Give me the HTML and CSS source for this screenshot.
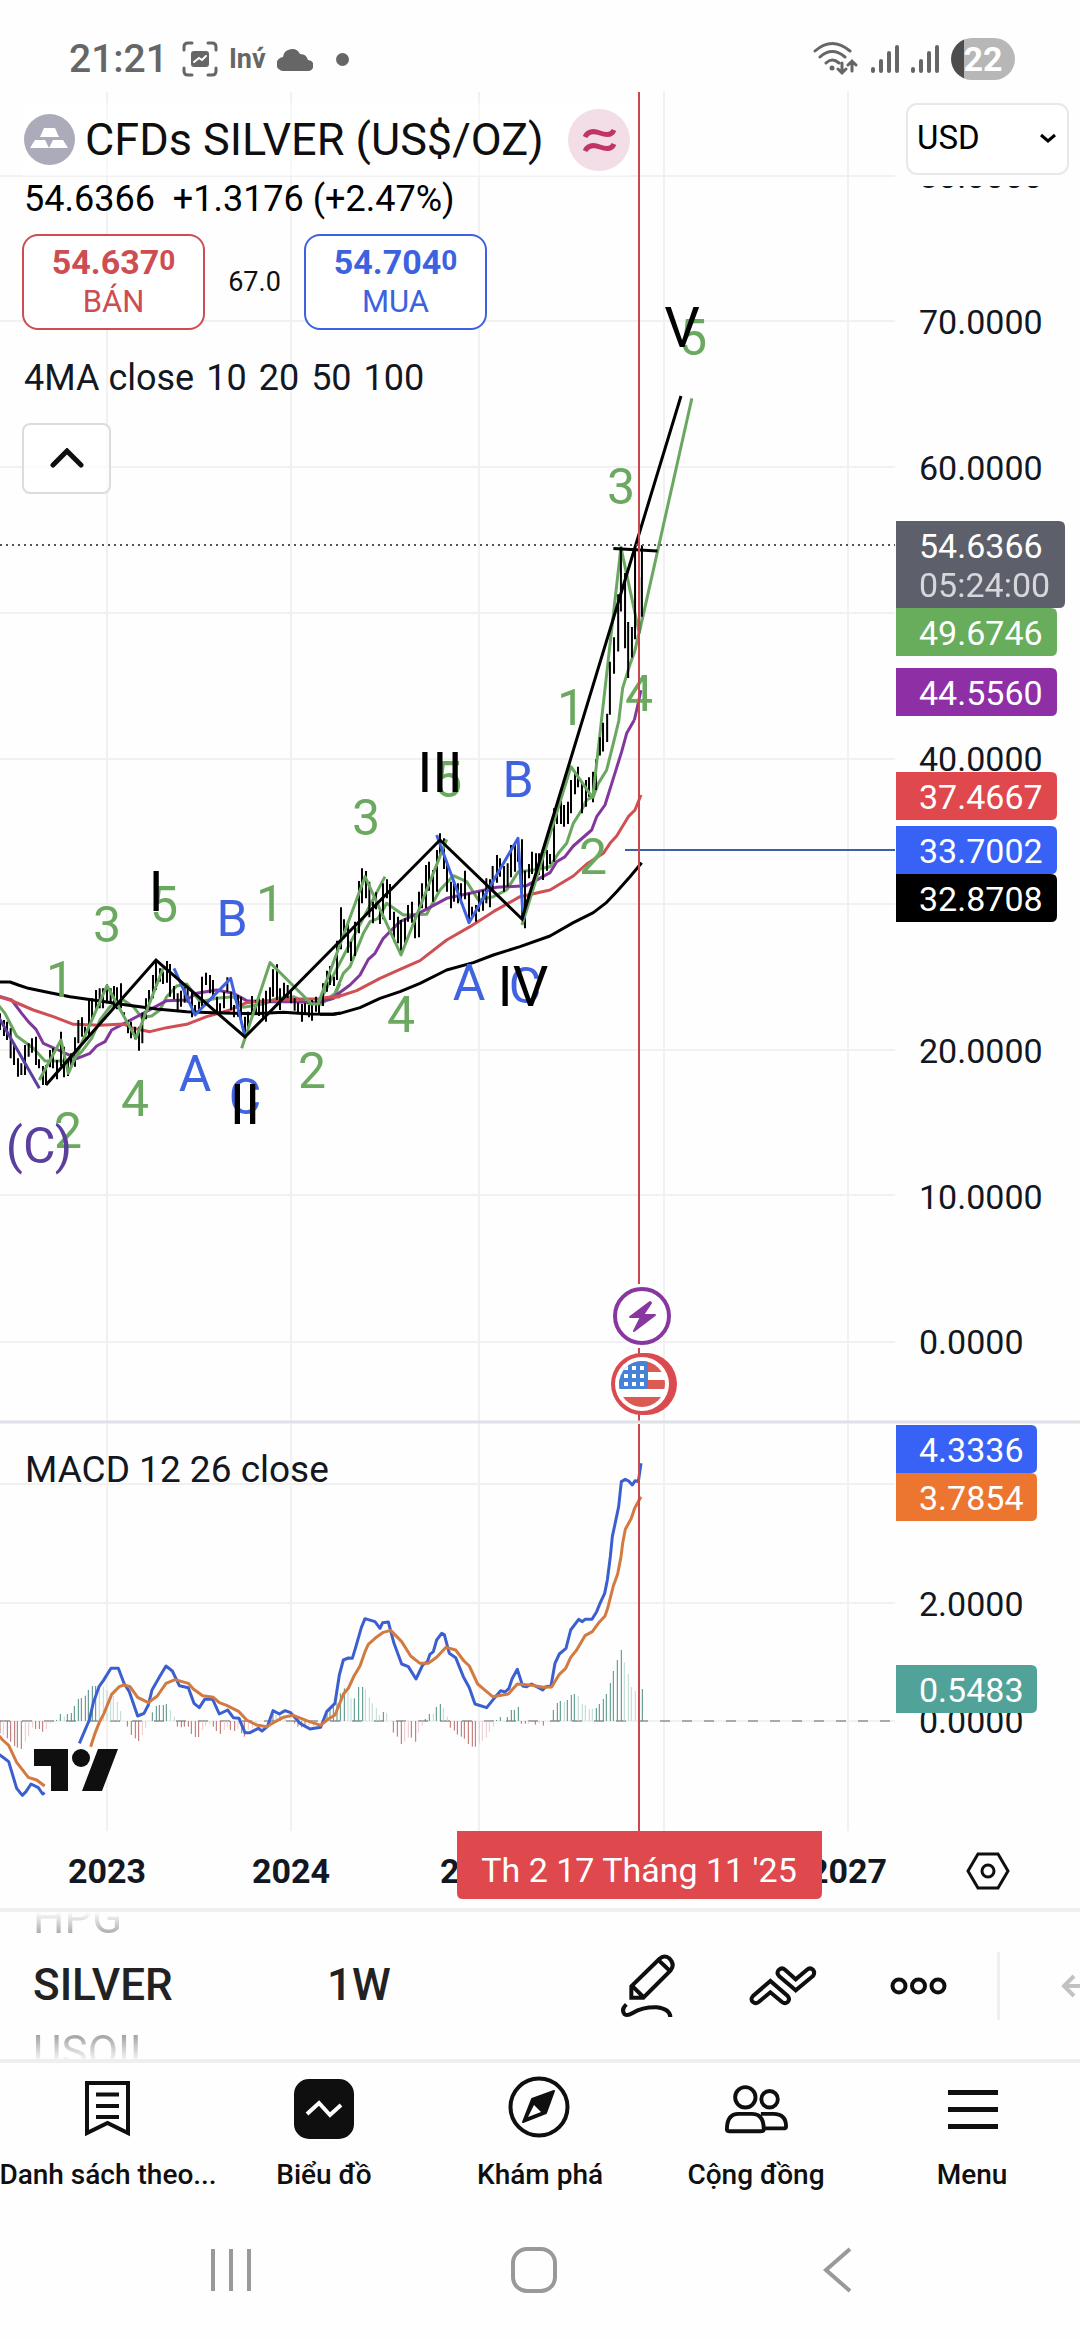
FILE: index.html
```html
<!DOCTYPE html>
<html lang="vi">
<head>
  <meta charset="UTF-8">
  <meta name="viewport" content="width=device-width, initial-scale=1.0">
  <title>SILVER 1W</title>
  <link rel="stylesheet" href="styles.css">
</head>
<body>
  <header class="status">
    <span class="clock">21:21</span>
    <svg width="36" height="36" viewBox="0 0 36 36" fill="none" stroke="#666" stroke-width="3" stroke-linecap="round">
      <path d="M2 9V6q0-4 4-4h4M26 2h4q4 0 4 4v3M34 27v3q0 4-4 4h-4M10 34H6q-4 0-4-4v-3"/>
      <rect x="9" y="10" width="18" height="16" rx="3" fill="#666" stroke="none"/>
      <path d="M12 21l5-4 3 2 4-4" stroke="#fff" stroke-width="2"/>
    </svg>
    <span class="app-note">Inv&#769;</span>
    <svg width="36" height="24" viewBox="0 0 36 24" fill="#666"><path d="M7 24a7 7 0 0 1-1-14 9 9 0 0 1 17-3 8 8 0 0 1 8 6 5.500 5.500 0 0 1 0 11z"/></svg>
    <span class="dot"></span>
    <div class="status-right">
      <svg width="46" height="36" viewBox="0 0 46 36" fill="none" stroke="#666" stroke-width="3" stroke-linecap="round">
        <path d="M2 10q17-15 35 0M7 16q12-11 25 0M13 22q6-6 13 0M29 22v10m-4-4l4 4 4-4M39 30V20m-4 4l4-4 4 4"/>
        <circle cx="19" cy="27" r="2.500" fill="#666" stroke="none"/>
      </svg>
      <svg width="28" height="30" viewBox="0 0 28 30" stroke="#666" stroke-width="4" stroke-linecap="round"><path d="M2 25v2M10 17v10M18 9v18M26 3v24"/></svg>
      <svg width="28" height="30" viewBox="0 0 28 30" stroke="#666" stroke-width="4" stroke-linecap="round"><path d="M2 25v2M10 17v10M18 9v18M26 3v24"/></svg>
      <span class="battery">22</span>
    </div>
  </header>

  <main class="chart">
    <svg class="plot" viewBox="0 92 1080 1816">
      <defs>
        <clipPath id="under"><rect x="900" y="186" width="180" height="20"/></clipPath>
      </defs>

      <!-- grid -->
      <path class="grid" d="M107 92V1831M291 92V1831M479 92V1831M664 92V1831M848 92V1831M0 176H895M0 321H895M0 467H895M0 613H895M0 759H895M0 904H895M0 1050H895M0 1195H895M0 1342H895M0 1484H895M0 1603H895M0 1721H895"/>
      <path d="M0 1721H895" stroke="#aaa" stroke-width="2" stroke-dasharray="10 12"/>

      <!-- price pane, left part -->
      <g class="lines" transform="translate(0 780) scale(.33333)">
        <path class="green" d="M-5 675L15 700L50 768L100 805L135 843H215L245 815L275 775L300 720L330 680L370 660L400 680L425 712L455 708L480 690L500 650L530 618L560 612L600 665L650 655L700 650L730 682L790 672L830 655L880 650L930 672L1000 655L1020 610"/>
        <path class="purple" d="M-5 648L35 660L65 700L85 725L108 748L130 790L175 810L230 836L270 820L290 798L315 785L335 750L360 737L420 705L500 662L560 660L590 640L650 630L700 640L740 662L800 665L880 665L960 668L1000 655L1020 638"/>
        <path class="red" d="M-5 650L30 660L100 690L160 710L220 733L300 736L370 732L400 745L450 755L500 743L560 733L620 710L690 690L740 668L800 662L900 657L960 657L1020 650"/>
        <path class="black" d="M-5 606H30L55 615L85 625L150 638L210 650L300 663L380 675L470 687L560 695L640 698L760 701L850 697L930 702L1000 703L1020 699"/>
        <path class="bars" d="M0 700V750M12 720V768M21 725V780M32 745V835M42 790V855M54 835V890M64 850V885M75 795V885M86 790V830M96 775V818M108 770V855M117 838V865M129 858V915M138 855V915M150 810V862M159 805V865M171 840V898M183 755V858M192 800V892M204 840V888M213 820V862M225 772V860M235 720V790M246 712V770M255 740V780M267 655V765M276 655V720M288 630V690M299 625V685M309 625V685M321 613V670M332 625V670M342 618V685M351 622V688M363 610V685M372 697V712M384 720V760M393 725V775M405 740V778M417 740V812M427 698V790M438 655V718M447 630V690M459 585V655M468 540V630M480 565V605M489 575V612M501 543V608M510 552V650M522 618V658M533 640V690M543 632V680M554 620V668M563 625V668M576 635V712M585 675V708M597 665V695M606 590V680M618 578V615M630 585V640M639 600V655M651 650V695M660 670V705M672 635V685M682 592V635M693 635V690M702 675V712M714 645V710M723 650V715M735 710V770M744 695V748M756 648V715M768 660V705M777 655V708M789 655V712M798 632V725M810 622V668M819 568V650M831 553V660M840 625V690M852 608V655M863 615V655M873 632V670M884 655V692M894 668V700M906 672V725M915 670V705M927 675V712M936 660V722M948 650V695M957 670V705"/>
        <path class="green" d="M118 900L183 780L205 880L321 617L408 775L489 565M725 805L810 548L935 672L955 672L1155 290"/>
        <path class="blue" d="M522 565L585 705L692 595L735 770"/>
        <path class="violet" d="M-5 710L118 925"/>
      </g>

      <!-- price pane, middle part -->
      <g class="lines" transform="translate(320 720) scale(.33333)">
        <path class="green" d="M0 855L45 820L70 760L90 740L130 640L150 605L175 595L200 550L250 585L320 583L360 510L400 467L440 485L475 540L520 530L560 510L595 455L640 450L690 440L715 400L740 370L760 310L785 270L800 240L820 230L835 190L860 150L880 70L897 0"/>
        <path class="purple" d="M0 848L45 828L90 795L120 765L145 718L165 700L190 655L240 605L300 578L380 535L450 520L530 502L620 497L690 458L710 425L735 410L760 378L815 330L830 290L855 255L880 175L905 95L920 40L943 0"/>
        <path class="red" d="M0 835L60 828L110 812L180 775L240 748L300 722L380 660L450 620L520 575L600 530L690 510L760 468L800 432L850 400L870 370L890 348L925 290L945 270L963 225"/>
        <path class="black" d="M0 883H40L60 880L120 863L180 835L240 815L300 790L380 750L460 728L520 705L600 680L690 648L760 608L820 578L860 547L890 515L930 470L965 428"/>
        <path class="bars" d="M9 790V858M21 752V815M30 738V795M42 770V798M51 662V780M63 562V688M72 598V655M84 612V698M93 665V723M105 605V708M117 483V640M126 445V550M138 453V535M148 485V592M159 545V610M168 517V568M180 565V612M189 490V598M201 478V535M210 492V600M222 575V665M234 590V670M243 600V705M255 595V670M264 555V605M276 545V608M285 590V655M297 515V652M306 490V565M318 435V565M327 425V512M339 450V545M351 390V515M360 340V415M372 355V447M381 425V515M393 485V565M402 485V545M414 490V550M423 490V550M435 452V538M447 520V605M456 560V588M468 555V605M477 515V575M489 510V572M499 475V550M510 478V562M518 438V515M531 405V488M540 415V470M552 438V515M563 430V500M573 375V472M585 370V455M594 355V425M606 358V600M615 452V625M627 432V475M636 395V462M648 400V455M657 400V465M669 410V480M681 390V452M690 402V432M702 265V425M711 260V312M723 235V312M732 255V320M744 245V312M753 180V280M765 155V223M774 140V202M786 190V280M798 180V260M807 172V230M819 155V247M828 118V210"/>
        <path class="green" d="M-5 850L135 470L243 705L380 358M606 615L753 140L819 235"/>
        <path class="blue" d="M350 345L447 608L594 355L610 600"/>
      </g>

      <!-- price pane, latest bars -->
      <g class="lines" transform="translate(540 280) scale(.34436 .40816)">
        <path class="green" d="M229 1078L240 1000L262 940L275 910L288 862M153 1270L235 655L288 865L441 290"/>
        <path class="purple" d="M274 1078L283 1045L293 1005"/>
        <path class="bars" d="M174 1120V1165M183 1085V1155M195 1063V1132M203 935V1065M215 875V965M227 770V910M235 655V812M247 718V902M256 838V975M267 850V925M276 655V880M288 728V865M296 650V825"/>
        <path class="black" d="M213 658L341 664"/>
      </g>

      <polyline class="impulse" points="46,1085 156,960 245,1037 440,840 522,919 681,396"/>
      <path d="M0 545H895" stroke="#555" stroke-width="2" stroke-dasharray="2 4"/>
      <path d="M625 850H895" stroke="#3c5fa8" stroke-width="2"/>

      <!-- wave labels -->
      <g class="wave w-green">
        <text x="60" y="997">1</text><text x="68" y="1148">2</text><text x="107" y="942">3</text><text x="135" y="1116">4</text><text x="164" y="922">5</text>
        <text x="270" y="921">1</text><text x="312" y="1088">2</text><text x="366" y="835">3</text><text x="401" y="1032">4</text><text x="448" y="797">5</text>
        <text x="571" y="725">1</text><text x="593" y="874">2</text><text x="621" y="504">3</text><text x="639" y="711">4</text><text x="693" y="355">5</text>
      </g>
      <g class="wave w-blue">
        <text x="195" y="1091">A</text><text x="232" y="936">B</text><text x="245" y="1114">C</text>
        <text x="469" y="1000">A</text><text x="518" y="797">B</text><text x="525" y="1003">C</text>
      </g>
      <text class="wave w-violet" x="39" y="1163">(C)</text>
      <g class="wave w-black">
        <text x="156" y="911">I</text><text x="245" y="1124">II</text><text x="440" y="792">III</text><text x="523" y="1006">IV</text><text x="682" y="347">V</text>
      </g>

      <!-- macd pane -->
      <text class="study" x="25" y="1482">MACD 12 26 close</text>
      <g class="lines" transform="translate(0 1560) scale(.33333)">
        <path class="h up" d="M170 483V480M181 483V462M202 483V462M214 483V459M223 483V438M235 483V417M244 483V414M256 483V407M265 483V390M277 483V378M287 483V378M457 483V457M469 483V438M478 483V435M490 483V435M499 483V432M810 483V470M819 483V462M840 483V468M981 483V460M990 483V445M1000 483V440M1011 483V430M1021 483V400M1033 483V385M1063 483V415M1076 483V381M1088 483V381M1150 483V456M1276 483V477M1288 483V462M1309 483V441M1321 483V432M1490 483V480M1501 483V471M1522 483V471M1534 483V450M1543 483V450M1555 483V441M1660 483V450M1672 483V429M1681 483V423M1702 483V420M1714 483V405M1723 483V402M1789 483V444M1798 483V432M1810 483V417M1819 483V402M1831 483V369M1840 483V333M1852 483V300M1864 483V270M1927 483V387"/>
        <path class="h up-weak" d="M193 483V470M298 483V385M310 483V380M321 483V390M332 483V400M340 483V408M352 483V426M362 483V453M511 483V450M523 483V470M828 483V465M855 483V470M1044 483V395M1053 483V415M1096 483V388M1108 483V412M1117 483V430M1129 483V444M1138 483V465M1160 483V460M1300 483V462M1330 483V444M1342 483V470M1693 483V426M1735 483V408M1747 483V432M1756 483V435M1768 483V447M1777 483V447M1873 483V306M1885 483V342M1894 483V381M1906 483V393"/>
        <path class="h down" d="M0 483V520M22 483V535M32 483V545M44 483V558M52 483V563M64 483V567M107 483V507M118 483V507M128 483V515M382 483V500M394 483V525M406 483V535M416 483V543M532 483V500M544 483V502M553 483V500M565 483V500M574 483V522M586 483V531M596 483V531M640 483V500M649 483V513M661 483V522M691 483V510M704 483V513M725 483V520M733 483V530M884 483V490M894 483V500M905 483V502M915 483V502M1180 483V518M1192 483V530M1204 483V552M1234 483V533M1247 483V545M1351 483V503M1363 483V512M1372 483V524M1384 483V530M1393 483V536M1405 483V552M1417 483V560M1426 483V560M1564 483V491M1576 483V491M1606 483V494M1630 483V497"/>
        <path class="h down-weak" d="M10 483V525M76 483V545M86 483V528M98 483V503M139 483V507M150 483V490M427 483V525M437 483V505M608 483V510M617 483V497M629 483V492M673 483V510M682 483V502M714 483V508M745 483V510M757 483V505M768 483V500M927 483V505M940 483V500M1214 483V545M1225 483V533M1255 483V518M1267 483V497M1438 483V550M1447 483V542M1459 483V533M1468 483V515M1480 483V500M1585 483V491M1618 483V490"/>
        <path class="macd" d="M-5 582L12 594L26 605L50 685L67 706L78 695L93 672L115 683L128 702L134 698M238 550L268 480L280 428L297 380L310 362L333 325H355L372 370L388 395L413 468L432 460L445 435L456 390L480 348L498 318L517 333L538 377L565 383L582 430L598 443L614 418H638L658 462L683 450L700 473L717 475L735 518H750L775 505L786 513L802 500L819 452L838 462L855 452L872 458L900 490L930 507L962 502L980 455L1005 430L1018 345L1030 300L1045 294L1057 295L1067 262L1084 203L1095 176L1125 185L1140 205L1148 188L1165 186L1182 250L1205 312L1225 320L1248 357L1268 315L1282 305L1290 283L1300 275L1310 240L1325 220L1333 224L1348 280L1367 293L1390 350L1408 383L1425 432L1460 443L1480 418L1502 392L1515 396L1527 385L1536 357L1552 328L1568 378L1580 380L1595 372L1628 390L1637 380L1653 378L1665 310L1678 282L1698 265L1712 210L1736 178L1747 185L1755 178H1776L1790 155L1800 130L1814 100L1822 60L1831 -10L1837 -70L1856 -160L1864 -235L1876 -242L1886 -237L1897 -225L1905 -238L1915 -235L1923 -290"/>
        <path class="signal" d="M-5 525L8 540L26 556L50 607L85 652L110 660L134 678M272 560L285 520L298 487L312 460L335 403L358 380L372 375L390 380L413 412L445 428L472 408L498 370L525 359L565 370L580 387L608 407L640 412L658 428L680 436L717 455L740 480L770 495L800 500L820 488L850 472L880 466L920 482L962 496L985 477L1005 465L1030 403L1045 385L1062 348L1080 318L1095 275L1105 253L1125 235L1150 217L1172 211L1205 245L1232 288L1260 310H1285L1310 292L1338 262L1367 270L1392 303L1408 318L1433 372L1452 388L1478 410L1525 402L1552 372L1595 376L1630 382L1655 381L1678 343L1697 325L1712 292L1730 270L1755 227L1777 215L1795 190L1815 168L1823 145L1840 78L1853 42L1863 -10L1868 -50L1876 -92L1894 -125L1904 -155L1923 -190"/>
      </g>
      <path d="M34 1749h34v42h-17v-25h-17zM98 1749h20l-16 42h-20z" fill="#0f0f0f"/>
      <circle cx="81" cy="1758" r="9" fill="#0f0f0f"/>

      <!-- crosshair and events -->
      <path d="M639 92V1284M639 1348V1421M639 1424V1831" stroke="#c9474d" stroke-width="2"/>
      <path d="M0 1422H1080" stroke="#dde0e6" stroke-width="3"/>
      <circle cx="642" cy="1316" r="27" fill="#fff" stroke="#8836a0" stroke-width="4"/>
      <path d="M650 1302L630 1317H641L634 1331L655 1315H643L651 1303Z" fill="#8836a0" stroke="#8836a0" stroke-width="2" stroke-linejoin="round"/>
      <circle cx="646" cy="1384" r="31" fill="#db4a4f"/>
      <circle cx="642" cy="1384" r="31" fill="#db4a4f"/>
      <circle cx="642" cy="1384" r="27" fill="#fff"/>
      <clipPath id="flag"><circle cx="642" cy="1384" r="23"/></clipPath>
      <g clip-path="url(#flag)">
        <path d="M618 1361h48v11h-48zM618 1380h48v9h-48zM618 1397h48v12h-48z" fill="#db5a52"/>
        <path d="M618 1361h30v28h-30z" fill="#4483d8"/>
        <path d="M624 1368h22M624 1376h22M624 1384h22" stroke="#fff" stroke-width="4" stroke-dasharray="4 4"/>
      </g>

      <!-- price scale -->
      <g class="scale">
        <text x="919" y="188" clip-path="url(#under)">80.0000</text>
        <text x="919" y="334">70.0000</text>
        <text x="919" y="480">60.0000</text>
        <text x="919" y="771">40.0000</text>
        <text x="919" y="1063">20.0000</text>
        <text x="919" y="1209">10.0000</text>
        <text x="919" y="1354">0.0000</text>
        <text x="919" y="1616">2.0000</text>
        <text x="919" y="1733">0.0000</text>
      </g>
      <g class="tags">
        <path fill="#5d5f6a" d="M896 521h163q6 0 6 6v75q0 6-6 6H896z"/>
        <path fill="#67ad5b" d="M896 608h155q6 0 6 6v36q0 6-6 6H896z"/>
        <path fill="#8e2fa6" d="M896 668h155q6 0 6 6v36q0 6-6 6H896z"/>
        <path fill="#df484c" d="M896 772h155q6 0 6 6v36q0 6-6 6H896z"/>
        <path fill="#3862f6" d="M896 826h155q6 0 6 6v36q0 6-6 6H896z"/>
        <path fill="#000" d="M896 874h155q6 0 6 6v36q0 6-6 6H896z"/>
        <path fill="#3862f6" d="M896 1425h135q6 0 6 6v36q0 6-6 6H896z"/>
        <path fill="#ec762f" d="M896 1473h135q6 0 6 6v36q0 6-6 6H896z"/>
        <path fill="#51a399" d="M896 1665h135q6 0 6 6v36q0 6-6 6H896z"/>
        <text x="919" y="558">54.6366</text>
        <text x="919" y="597" opacity=".75">05:24:00</text>
        <text x="919" y="645">49.6746</text>
        <text x="919" y="705">44.5560</text>
        <text x="919" y="809">37.4667</text>
        <text x="919" y="863">33.7002</text>
        <text x="919" y="911">32.8708</text>
        <text x="919" y="1462">4.3336</text>
        <text x="919" y="1510">3.7854</text>
        <text x="919" y="1702">0.5483</text>
      </g>

      <!-- time scale -->
      <g class="scale years">
        <text x="107" y="1883">2023</text><text x="291" y="1883">2024</text><text x="479" y="1883">2025</text><text x="848" y="1883">2027</text>
      </g>
      <path fill="#df484c" d="M457 1831h365v62q0 6-6 6h-353q-6 0-6-6z"/>
      <text class="cursor-date" x="639" y="1882">Th 2 17 Tháng 11 '25</text>
      <path d="M978 1854h20l10 17-10 17h-20l-10-17z" fill="none" stroke="#0f0f0f" stroke-width="3"/>
      <circle cx="988" cy="1871" r="6" fill="none" stroke="#0f0f0f" stroke-width="3"/>
    </svg>

    <section class="legend">
      <div class="title">
        <svg width="51" height="51" viewBox="0 0 51 51"><circle cx="25.500" cy="25.500" r="25.500" fill="#acabb9"/><path fill="#fff" d="M20 14h11l4 9H16zM11 26h10l4 8H6zM29 26h10l5 8H25z"/></svg>
        <h1>CFDs SILVER (US$/OZ)</h1>
        <svg width="62" height="62" viewBox="0 0 62 62"><circle cx="31" cy="31" r="31" fill="#f3dde7"/><path d="M17 28q4-8 15-4t14-3M17 42q4-8 15-4t14-3" fill="none" stroke="#bf3564" stroke-width="5"/></svg>
      </div>
      <p class="price">54.6366&nbsp; +1.3176 (+2.47%)</p>
      <div class="trade">
        <button type="button" class="sell"><b>54.637<i>0</i></b>BÁN</button>
        <span>67.0</span>
        <button type="button" class="buy"><b>54.704<i>0</i></b>MUA</button>
      </div>
      <p class="study-name"><span>4MA close</span><span>10</span><span>20</span><span>50</span><span>100</span></p>
      <button type="button" class="collapse" aria-label="Thu gọn">
        <svg width="34" height="22" viewBox="0 0 34 22" fill="none" stroke="#0f0f0f" stroke-width="5" stroke-linecap="round"><path d="M3 17L17 3L31 17"/></svg>
      </button>
    </section>

    <div class="currency">
      <select aria-label="Tiền tệ"><option>USD</option></select>
      <svg width="18" height="12" viewBox="0 0 18 12" fill="none" stroke="#000" stroke-width="3"><path d="M2 2l7 6 7-6"/></svg>
    </div>
  </main>

  <section class="toolbar">
    <div class="wheel">
      <span>HPG</span>
      <strong>SILVER</strong>
      <span class="next">USOIL</span>
    </div>
    <strong class="interval">1W</strong>
    <div class="tools">
      <button type="button" aria-label="Vẽ">
        <svg width="56" height="66" viewBox="60 188 168 198" fill="none" stroke="#0f0f0f" stroke-width="12">
          <path d="M94 322V288L178 206Q192 192 208 204Q226 222 212 240L130 322ZM174 208L210 242M98 288L130 320"/>
          <path d="M79 342Q62 358 74 372Q82 378 98 368Q128 350 170 351Q210 356 211 380"/>
        </svg>
      </button>
      <button type="button" aria-label="Chỉ báo">
        <svg width="68" height="42" viewBox="447 223 204 126" fill="none" stroke="#0f0f0f" stroke-width="12">
          <path d="M511 271L459 316Q450 326 459 334Q467 341 476 334L511 305L546 334Q555 341 563 334Q571 326 563 316Z"/>
          <path d="M587 299L537 256Q528 246 537 237Q546 229 555 237L587 266L621 237Q630 229 639 237Q646 246 639 256Z"/>
        </svg>
      </button>
      <button type="button" aria-label="Thêm">
        <svg width="57" height="18" viewBox="0 0 57 18" fill="none" stroke="#0f0f0f" stroke-width="4"><circle cx="9" cy="9" r="6.500"/><circle cx="28.500" cy="9" r="6.500"/><circle cx="48" cy="9" r="6.500"/></svg>
      </button>
    </div>
    <span class="rule"></span>
    <svg width="19" height="24" viewBox="0 0 19 24" fill="none" stroke="#c2c2c2" stroke-width="4"><path d="M13 2L3 12l10 10M4 12h15"/></svg>
  </section>

  <nav class="tabs">
    <a href="#">
      <svg width="64" height="64" viewBox="0 0 64 64" fill="none" stroke="#0f0f0f" stroke-width="4"><path d="M11 7H52V57L31.500 47L11 57ZM20 18.500H43M20 30H43M20 41H43"/></svg>
      <span>Danh sách theo...</span>
    </a>
    <a href="#">
      <svg width="64" height="64" viewBox="0 0 64 64"><rect x="2" y="3" width="60" height="60" rx="15" fill="#0f0f0f"/><path d="M15 38L27 27L38 39L49 29" fill="none" stroke="#fff" stroke-width="4"/></svg>
      <span>Biểu đồ</span>
    </a>
    <a href="#">
      <svg width="64" height="64" viewBox="0 0 64 64"><circle cx="31" cy="31" r="28.500" fill="none" stroke="#0f0f0f" stroke-width="4"/><path d="M46 15L24 23L15 46L38 37Z" fill="#0f0f0f" stroke="#0f0f0f" stroke-width="2" stroke-linejoin="round"/><path d="M26 29L33 36L20 41Z" fill="#fff"/></svg>
      <span>Khám phá</span>
    </a>
    <a href="#">
      <svg width="64" height="64" viewBox="0 0 66 64" fill="none" stroke="#0f0f0f" stroke-width="4"><circle cx="22" cy="21" r="10.500"/><circle cx="47" cy="23" r="8.500"/><path d="M3 54Q3 38 15 38H29Q41 38 41 54Q41 56 38 56H6Q3 56 3 54ZM38 38H51Q64 38 64 51Q64 53 61 53H42"/></svg>
      <span>Cộng đồng</span>
    </a>
    <a href="#">
      <svg width="64" height="64" viewBox="0 0 64 64" stroke="#0f0f0f" stroke-width="5"><path d="M8 16.500H58M8 33.500H58M8 50.500H58"/></svg>
      <span>Menu</span>
    </a>
  </nav>

  <footer class="system">
    <svg width="44" height="46" viewBox="0 0 44 46" stroke="#999" stroke-width="4"><path d="M4 2V44M22 2V44M40 2V44"/></svg>
    <svg width="46" height="46" viewBox="0 0 46 46" fill="none" stroke="#999" stroke-width="4"><rect x="2" y="2" width="42" height="42" rx="14"/></svg>
    <svg width="44" height="46" viewBox="0 0 44 46" fill="none" stroke="#999" stroke-width="4"><path d="M34 2L10 23L34 44"/></svg>
  </footer>
</body>
</html>
```
FILE: styles.css
```css
* {
  box-sizing: border-box;
}

body {
  margin: 0;
  background: #fefefe;
  color: #0f0f0f;
  font-family: Roboto, "Liberation Sans", sans-serif;
}

h1, p {
  margin: 0;
  font-weight: 400;
}

button {
  background: none;
  border: none;
  padding: 0;
  font-family: inherit;
}

svg {
  flex: none;
}

/* status bar */
.status {
  display: flex;
  align-items: center;
  height: 92px;
  padding: 26px 65px 0 69px;
  color: #666;
}

.clock {
  font-size: 39px;
  font-weight: 500;
  margin-right: 14px;
}

.app-note {
  margin: 0 11px;
  font-size: 27px;
  font-weight: 700;
}

.dot {
  width: 13px;
  height: 13px;
  margin-left: 23px;
  border-radius: 50%;
  background: #666;
}

.status-right {
  display: flex;
  align-items: center;
  gap: 12px;
  margin-left: auto;
}

.battery {
  width: 64px;
  height: 42px;
  border-radius: 21px;
  background: linear-gradient(to right, #4d4d4d 13px, #b7b7b7 13px);
  color: #fff;
  font-size: 34px;
  font-weight: 700;
  line-height: 42px;
  text-align: center;
}

/* chart */
.chart {
  position: relative;
}

.plot {
  display: block;
  width: 100%;
}

.grid {
  stroke: #f1f1f2;
  stroke-width: 2;
}

.lines path {
  fill: none;
  stroke-width: 3px;
  stroke-linejoin: round;
  vector-effect: non-scaling-stroke;
}

.lines .green { stroke: #6aa760; }
.lines .purple { stroke: #82389a; }
.lines .red { stroke: #cf5054; }
.lines .blue { stroke: #4063dd; }
.lines .violet { stroke: #5a3f9e; }
.lines .black { stroke: #000; }
.lines .macd { stroke: #3c5fd0; }
.lines .signal { stroke: #d27a40; }

.lines .bars {
  stroke: #000;
  stroke-width: 2px;
}

.lines .h { stroke-width: 1px; }
.lines .up { stroke: #4d8f80; }
.lines .up-weak { stroke: #bcdad5; }
.lines .down { stroke: #b86a6a; }
.lines .down-weak { stroke: #ecc9cd; }

.impulse {
  fill: none;
  stroke: #000;
  stroke-width: 3;
}

.wave {
  font-size: 50px;
  text-anchor: middle;
}

.w-green { fill: #6aa95f; }
.w-blue { fill: #4063e0; }
.w-violet { fill: #5a3f9e; }

.w-black {
  fill: #000;
  font-size: 56px;
}

.study {
  font-size: 37px;
  fill: #131722;
}

.scale {
  font-size: 34px;
  fill: #131722;
}

.years {
  font-weight: 700;
  text-anchor: middle;
}

.tags {
  font-size: 34px;
  fill: #fff;
}

.cursor-date {
  font-size: 34px;
  fill: #fff;
  text-anchor: middle;
}

/* legend over the chart */
.legend {
  position: absolute;
  top: 11px;
  left: 0;
  padding-left: 22px;
}

.title {
  display: flex;
  align-items: center;
  height: 73px;
  padding-left: 2px;
  background: rgba(255, 255, 255, 0.5);
}

.title h1 {
  margin: 0 24px 0 10px;
  font-size: 45px;
  white-space: nowrap;
}

.price {
  padding-left: 2px;
  font-size: 36px;
  line-height: 46px;
  color: #000;
}

.trade {
  display: flex;
  align-items: center;
  margin-top: 12px;
}

.trade button {
  width: 183px;
  height: 96px;
  border: 2px solid;
  border-radius: 16px;
  background: #fff;
  font-size: 31px;
  line-height: 40px;
}

.trade b {
  display: block;
  font-size: 34px;
  font-weight: 700;
}

.trade i {
  font-size: 28px;
  font-style: normal;
  vertical-align: 4px;
  line-height: 28px;
}

.trade span {
  width: 99px;
  text-align: center;
  font-size: 27px;
}

.sell { color: #cd4d53; }
.buy { color: #3d62df; }

.study-name {
  display: flex;
  gap: 12px;
  margin-top: 25px;
  padding-left: 2px;
  font-size: 36px;
  line-height: 46px;
  color: #131722;
}

.collapse {
  display: flex;
  align-items: center;
  justify-content: center;
  width: 89px;
  height: 71px;
  margin-top: 22px;
  border: 2px solid #dcdcdc;
  border-radius: 8px;
  background: rgba(255, 255, 255, 0.7);
}

.currency {
  position: absolute;
  top: 11px;
  right: 11px;
  display: flex;
  align-items: center;
}

.currency select {
  width: 163px;
  height: 72px;
  padding: 0 9px 3px;
  appearance: none;
  border: 2px solid #e8e8e8;
  border-radius: 11px;
  background: #fff;
  color: #000;
  font-family: inherit;
  font-size: 33px;
}

.currency svg {
  margin-left: -30px;
  margin-right: 12px;
  pointer-events: none;
}

/* toolbar */
.toolbar {
  display: flex;
  align-items: center;
  height: 155px;
  border-top: 4px solid #efefef;
  border-bottom: 4px solid #efefef;
}

.wheel {
  display: flex;
  flex-direction: column;
  justify-content: center;
  width: 327px;
  height: 147px;
  padding-left: 33px;
  overflow: hidden;
}

.wheel span {
  flex: none;
  font-size: 44px;
  line-height: 67px;
  color: transparent;
  background: linear-gradient(to bottom, #fefefe 40%, #a5a5a5 75%);
  background-clip: text;
}

.wheel .next {
  background: linear-gradient(to top, #fefefe 35%, #a5a5a5 75%);
  background-clip: text;
}

.wheel strong, .interval {
  flex: none;
  font-size: 44px;
  font-weight: 500;
  line-height: 67px;
  color: #222;
}

.tools {
  display: flex;
  align-items: center;
  gap: 73px;
  margin-left: auto;
}

.tools svg {
  display: block;
}

.rule {
  width: 3px;
  height: 68px;
  margin: 0 61px 0 50px;
  background: #efefef;
}

/* bottom tabs */
.tabs {
  display: grid;
  grid-template-columns: repeat(5, 1fr);
  padding-top: 13px;
}

.tabs a {
  display: flex;
  flex-direction: column;
  align-items: center;
  min-width: 0;
  color: #0f0f0f;
  text-decoration: none;
}

.tabs span {
  margin-top: 18px;
  font-size: 28px;
  font-weight: 500;
  line-height: 34px;
  white-space: nowrap;
}

.system {
  display: flex;
  justify-content: space-around;
  align-items: center;
  padding: 55px 91px 53px 80px;
}
```
